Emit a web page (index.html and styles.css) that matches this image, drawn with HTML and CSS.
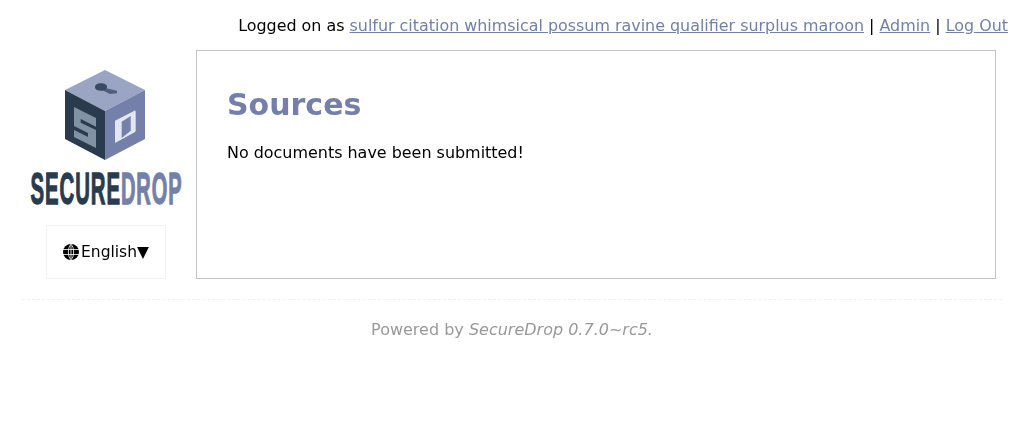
FILE: index.html
```html
<!DOCTYPE html>
<html lang="en">
<head>
<meta charset="utf-8">
<title>SecureDrop | Sources</title>
<link rel="stylesheet" href="styles.css">
</head>
<body>
<header class="topbar">Logged on as <a href="#">sulfur citation whimsical possum ravine qualifier surplus maroon</a> | <a href="#">Admin</a> | <a href="#">Log Out</a></header>
<div class="layout">
  <aside class="sidebar">
    <svg class="logo" viewBox="0 0 152 136" width="152" height="136" role="img" aria-label="SecureDrop">
      <polygon points="75,0 115,20 75,41 35,20" fill="#9aa5c4"/>
      <polygon points="35,20 75,41 75,90 35,69" fill="#2a3b4d"/>
      <polygon points="115,20 75,41 75,90 115,69" fill="#7480aa"/>
      <path d="M75 18l12 2.800v2.400l-7 .7-7-3.400z" fill="#4f5d80"/>
      <path d="M65 17.300c0-2.800 2.500-4 6-4s6 1.300 6 3.600c0 2.300-3 3.800-6 3.800s-6-.9-6-3.400z" fill="#3a4a62"/>
      <polygon points="44,37 66,48 66,78 44,67" fill="#7f93a5"/>
      <polygon points="50.700,49 66,56.700 66,60 50.700,52.700" fill="#2a3b4d"/>
      <polygon points="44,56 58,63 58,67 44,60" fill="#2a3b4d"/>
      <path d="M85 50.700l19-9.800q1.700-.9 1.700 1V60.700q0 1-1 1.500L85 73z" fill="#e1e6f2"/>
      <polygon points="91.700,51.700 100.700,46 100.700,60.700 91.700,68" fill="#7480aa"/>
      <text class="logo-text logo-dark" transform="translate(.5 134.400) scale(.468 1)">SECURE</text>
      <text class="logo-text logo-light" transform="translate(91 134.400) scale(.46 1)">DROP</text>
    </svg>
    <div class="locale">
      <svg class="globe" viewBox="0 0 16 16" width="16" height="16" aria-hidden="true">
        <circle cx="8" cy="8" r="8" fill="#000"/>
        <path d="M0 5.500h16M0 10.500h16M8 0v16M8 .5C4.500 3 4.500 13 8 15.500M8 .5c3.500 2.500 3.500 12.500 0 15" fill="none" stroke="#fff" stroke-width=".8"/>
      </svg>
      <span>English▼</span>
    </div>
  </aside>
  <main class="content">
    <h1>Sources</h1>
    <p>No documents have been submitted!</p>
  </main>
</div>
<footer class="footer">Powered by <em>SecureDrop 0.7.0~rc5.</em></footer>
</body>
</html>
```
FILE: styles.css
```css
html, body {
  margin: 0;
  padding: 0;
  background: #fff;
}
body {
  font-family: "DejaVu Sans", sans-serif;
  font-size: 16px;
  line-height: 18px;
  color: #000;
}
a {
  color: #7480aa;
}
.topbar {
  padding: 17px 16px 0 0;
  height: 50px;
  box-sizing: border-box;
  text-align: right;
  font-size: 15.920px;
  will-change: transform;
}
.layout {
  display: flex;
  align-items: flex-start;
  padding-left: 30px;
}
.sidebar {
  width: 152px;
  margin-right: 14px;
  padding-top: 20px;
  display: flex;
  flex-direction: column;
  align-items: center;
}
.logo {
  display: block;
  overflow: visible;
}
.logo-text {
  font-family: "Liberation Sans", sans-serif;
  font-weight: 700;
  font-size: 43.500px;
  letter-spacing: 2px;
  stroke-width: 1.300px;
}
.logo-dark {
  fill: #2a3b4d;
  stroke: #2a3b4d;
}
.logo-light {
  fill: #7480aa;
  stroke: #7480aa;
}
.locale {
  box-sizing: border-box;
  width: 120px;
  height: 54px;
  margin-top: 19px;
  border: 1px solid #f2f2f2;
  display: flex;
  align-items: center;
  justify-content: center;
  gap: 2px;
  font-size: 15.500px;
  will-change: transform;
}
.globe {
  display: block;
}
.content {
  box-sizing: border-box;
  width: 800px;
  height: 229px;
  border: 1px solid #c4c4c4;
  padding: 36px 30px 0;
  will-change: transform;
}
.content h1 {
  margin: 0;
  font-size: 30px;
  line-height: 36px;
  font-weight: 700;
  color: #7480aa;
}
.content p {
  margin: 21px 0 0;
  font-size: 15.950px;
}
.footer {
  margin: 20px 22px 0;
  padding-top: 21px;
  border-top: 1px dashed #f0f0f0;
  text-align: center;
  color: #999;
  will-change: transform;
}
```
